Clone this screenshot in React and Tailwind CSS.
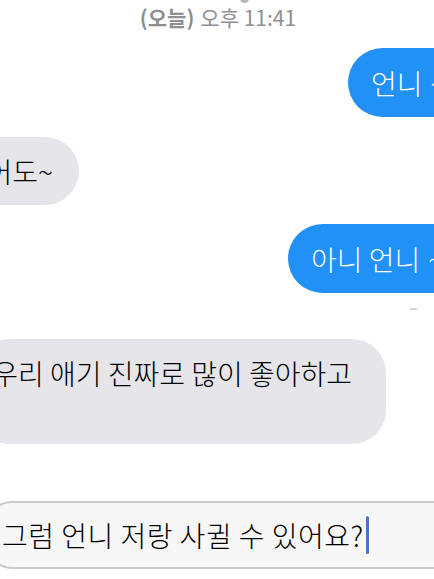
export default function App() {
  const font = { fontFamily: '"Noto Sans CJK KR", "Noto Sans", sans-serif' }
  return (
    <div className="relative h-[579px] w-[434px] overflow-hidden bg-white" style={font}>
      <div className="absolute left-[240px] top-[-6px] h-[9px] w-[9px] rounded-full bg-[#b8b8bc]" />
      <div className="flex flex-col">
        <div className="flex h-[34px] items-center justify-center pl-[2px] text-[21px] leading-none text-[#8e8e93]">
          <span className="font-semibold">(오늘)</span>
          <span className="ml-[6px]">오후 11:41</span>
        </div>

        <div className="mt-[14px] flex">
          <div className="ml-[348px] flex h-[69px] w-[200px] shrink-0 items-center whitespace-nowrap rounded-full bg-[#2190f7] pl-[23px] text-[28px] font-light text-white">
            언니<span className="ml-[8px]">~</span>
          </div>
        </div>

        <div className="mt-[20px] flex">
          <div className="ml-[-121px] flex h-[68px] w-[200px] shrink-0 items-center justify-end whitespace-nowrap rounded-full bg-[#e6e5ea] pr-[26px] text-[28px] font-light text-black">
            되어도~
          </div>
        </div>

        <div className="mt-[19px] flex">
          <div className="ml-[288px] flex h-[69px] w-[260px] shrink-0 items-center whitespace-nowrap rounded-full bg-[#2190f7] pl-[23px] text-[28px] font-light text-white">
            아니 언니<span className="ml-[8px]">~</span>
          </div>
        </div>

        <div className="mt-[15px] flex">
          <div className="ml-[410px] h-[2px] w-[7px] bg-[#d6d6d6]" />
        </div>

        <div className="mt-[29px] flex">
          <div className="ml-[-24px] flex h-[105px] w-[410px] shrink-0 justify-end rounded-[34px] bg-[#e6e5ea] pr-[34px] pt-[16px] text-[28px] font-light leading-[36px] text-black">
            <span className="whitespace-nowrap">우리 애기 진짜로 많이 좋아하고</span>
          </div>
        </div>

        <div className="mt-[57px] flex">
          <div className="ml-[-14px] flex h-[68px] w-[480px] shrink-0 items-center rounded-[26px] border-2 border-[#c9c9cc] bg-[#f7f7f8] pl-[14px] text-[28px] font-light tracking-[0.5px] text-black">
            <span className="whitespace-nowrap">그럼 언니 저랑 사귈 수 있어요?</span>
            <span className="ml-[2px] h-[38px] w-[3px] rounded-full bg-[#4d73c9]" />
          </div>
        </div>
      </div>
    </div>
  )
}
